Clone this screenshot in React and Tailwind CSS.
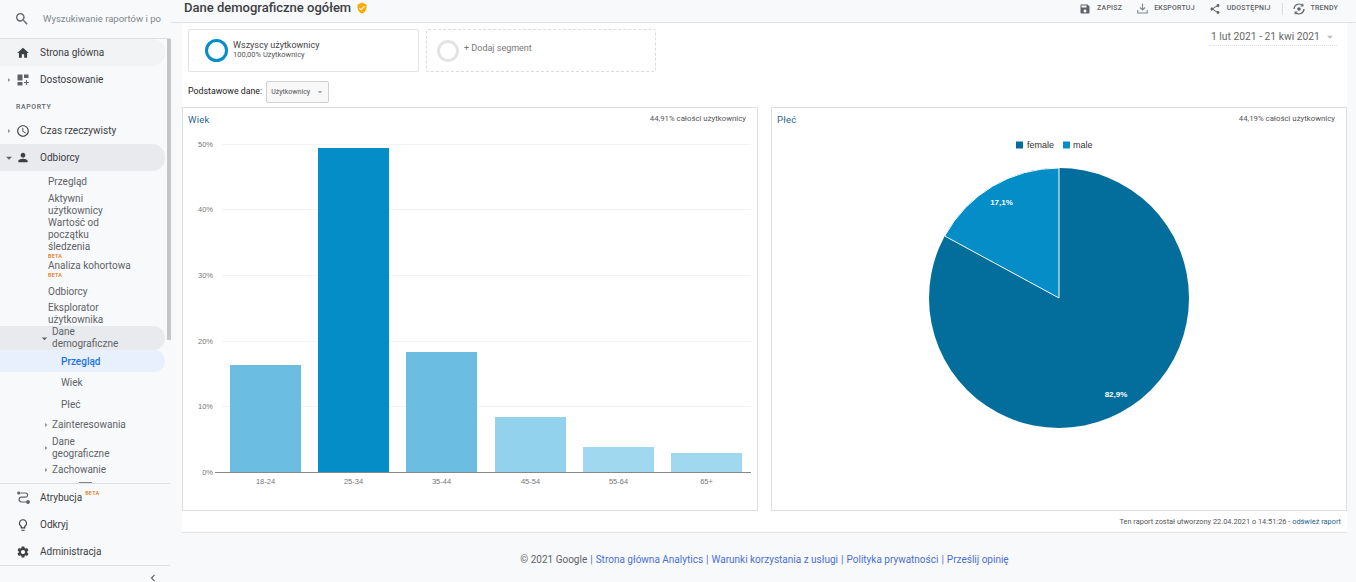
import {
  MdHome,
  MdAccessTime,
  MdPerson,
  MdSearch,
  MdLightbulbOutline,
  MdSettings,
  MdSave,
  MdShare,
  MdVerifiedUser,
  MdChevronLeft,
  MdArrowRight,
  MdArrowDropDown,
} from 'react-icons/md'

const font = { fontFamily: 'Roboto, sans-serif' }

const bars = [
  { label: '18-24', x: 47, top: 365, color: '#6cbde2' },
  { label: '25-34', x: 135, top: 148, color: '#058dc7' },
  { label: '35-44', x: 223, top: 352, color: '#6cbde2' },
  { label: '45-54', x: 312, top: 417, color: '#92d2ec' },
  { label: '55-64', x: 400, top: 447, color: '#a0d8f0' },
  { label: '65+', x: 488, top: 453, color: '#a0d8f0' },
]

const ticks = [
  { label: '50%', y: 144 },
  { label: '40%', y: 209 },
  { label: '30%', y: 275 },
  { label: '20%', y: 341 },
  { label: '10%', y: 406 },
]

function DashIcon() {
  return (
    <svg width="12" height="12" viewBox="0 0 12 12" fill="#5f6368">
      <rect x="0.5" y="0.5" width="5" height="6" />
      <rect x="7" y="0.5" width="4.5" height="3.5" />
      <rect x="0.5" y="8" width="5" height="3.5" />
      <path d="M9 6h1v2h2v1h-2v2H9V9H7V8h2z" />
    </svg>
  )
}

function AttrIcon() {
  return (
    <svg width="13" height="13" viewBox="0 0 13 13" fill="none" stroke="#5f6368" strokeWidth="1.2">
      <circle cx="1.8" cy="2" r="1" fill="#5f6368" />
      <circle cx="11" cy="11" r="1.3" fill="#5f6368" />
      <path d="M3.5 2H8.5A2 2 0 0 1 8.5 6.2H4.5A2.2 2.2 0 0 0 4.5 11H9.5" />
    </svg>
  )
}

function TrendIcon() {
  return (
    <svg width="12" height="12" viewBox="0 0 12 12" fill="none" stroke="#5f6368" strokeWidth="1.2">
      <path d="M1 6a5 5 0 0 1 8.5-3.5M11 6a5 5 0 0 1-8.5 3.5" />
      <path d="M9.8 0.8v2.2H7.6M2.2 11.2V9h2.2" />
      <circle cx="6" cy="6" r="1.8" fill="#5f6368" stroke="none" />
    </svg>
  )
}

function ExportIcon() {
  return (
    <svg width="11" height="11" viewBox="0 0 11 11" fill="none" stroke="#80868b" strokeWidth="1.1">
      <path d="M5.5 0.5v6M3 4.5l2.5 2.5L8 4.5" />
      <path d="M0.8 7v3h9.4V7" />
    </svg>
  )
}

function MainRow({ icon, label, arrow, className = 'h-[27px]', children }) {
  return (
    <div className={`flex w-[165px] shrink-0 items-center rounded-r-[13px] ${className}`}>
      <span className="flex w-[16px] justify-center pl-[2px] text-[#5f6368]">
        {arrow === 'right' && <MdArrowRight size={10} className="text-[#80868b]" />}
        {arrow === 'down' && <MdArrowDropDown size={14} />}
      </span>
      <span className="flex w-[14px] justify-center text-[#3c4043]">{icon}</span>
      <span className="ml-[10px] text-[10px] leading-[12px] text-[#3c4043]">{label}</span>
      {children}
    </div>
  )
}

function Beta() {
  return <div className="text-[5.5px] font-medium leading-[6px] tracking-[0.2px] text-[#e8710a]">BETA</div>
}

function SubRow({ children, className = '' }) {
  return <div className={`pl-[48px] text-[10px] leading-[12px] text-[#5f6368] ${className}`}>{children}</div>
}

function TreeRow({ children, open, className = '' }) {
  return (
    <div className={`flex w-[165px] items-center rounded-r-[13px] ${open ? 'bg-[#e8eaed]' : ''} ${className}`}>
      <span className="flex w-[51px] shrink-0 justify-end text-[#5f6368]">
        {open ? <MdArrowDropDown size={13} /> : <MdArrowRight size={10} className="text-[#80868b]" />}
      </span>
      <span className="ml-[1px] text-[10px] leading-[12px] text-[#5f6368]">{children}</span>
    </div>
  )
}

function Sidebar() {
  return (
    <aside className="relative flex h-[582px] w-[170px] shrink-0 flex-col bg-[#f8f9fa]">
      <div className="flex h-[39px] shrink-0 items-center border-b border-[#e0e0e0] pl-[14px]">
        <MdSearch size={16} className="text-[#5f6368]" />
        <span className="ml-[13px] whitespace-nowrap text-[9.5px] text-[#80868b]">Wyszukiwanie raportów i po</span>
      </div>

      <div className="h-[444px] shrink-0 overflow-hidden">
        <MainRow icon={<MdHome size={14} />} label="Strona główna" className="h-[27px] bg-[#f1f3f4]" />
        <MainRow icon={<DashIcon />} label="Dostosowanie" arrow="right" />
        <div className="flex h-[26px] items-center pl-[16px] pt-[2px] text-[7px] font-medium tracking-[0.6px] text-[#5f6368]">RAPORTY</div>
        <MainRow icon={<MdAccessTime size={14} />} label="Czas rzeczywisty" arrow="right" className="h-[23px]" />
        <MainRow icon={<MdPerson size={15} />} label="Odbiorcy" arrow="down" className="mt-[2px] h-[27px] bg-[#e8eaed]" />

        <SubRow className="pt-[5px]">Przegląd</SubRow>
        <SubRow className="pt-[5px]">Aktywni<br />użytkownicy</SubRow>
        <SubRow>Wartość od<br />początku<br />śledzenia</SubRow>
        <SubRow><Beta /></SubRow>
        <SubRow className="pt-[1px]">Analiza kohortowa</SubRow>
        <SubRow><Beta /></SubRow>
        <SubRow className="pt-[8px]">Odbiorcy</SubRow>
        <SubRow className="pt-[4px]">Eksplorator<br />użytkownika</SubRow>
        <TreeRow open>Dane<br />demograficzne</TreeRow>
        <div className="flex h-[22px] w-[165px] items-center rounded-r-[13px] bg-[#e8f0fe] pl-[61px] text-[10px] font-medium text-[#1a73e8]">Przegląd</div>
        <div className="flex h-[21px] items-center pl-[61px] text-[10px] text-[#5f6368]">Wiek</div>
        <div className="flex h-[22px] items-center pl-[61px] text-[10px] text-[#5f6368]">Płeć</div>
        <TreeRow className="h-[19px]">Zainteresowania</TreeRow>
        <TreeRow className="mt-[2px]">Dane<br />geograficzne</TreeRow>
        <TreeRow className="h-[20px]">Zachowanie</TreeRow>
      </div>

      <div className="flex-1 border-t border-[#e0e0e0]">
        <MainRow icon={<AttrIcon />} label="Atrybucja">
          <span className="-mt-[8px] ml-[3px] text-[5.5px] font-medium tracking-[0.2px] text-[#e8710a]">BETA</span>
        </MainRow>
        <MainRow icon={<MdLightbulbOutline size={14} />} label="Odkryj" />
        <MainRow icon={<MdSettings size={14} />} label="Administracja" />
        <div className="flex h-[17px] justify-end border-t border-[#e0e0e0] pr-[10px] pt-[5px]">
          <MdChevronLeft size={14} className="text-[#5f6368]" />
        </div>
      </div>

      <div className="absolute left-[79px] top-[482px] h-px w-[13px] bg-[#888]" />
      <div className="absolute left-[167px] top-[39px] h-[301px] w-[4px] bg-[#c4c6c8]" />
    </aside>
  )
}

function Action({ icon, label, className = '' }) {
  return (
    <div className={`flex items-center gap-[6px] ${className}`}>
      {icon}
      <span className="text-[7px] font-medium tracking-[0.2px] text-[#5f6368]">{label}</span>
    </div>
  )
}

function Header() {
  return (
    <header className="flex h-[23px] shrink-0 items-center justify-between border-b border-[#e3e3e3] pl-[14px] pr-[18px]">
      <div className="-mt-[7px] flex items-center gap-[5px]">
        <h1 className="whitespace-nowrap text-[13px] font-medium leading-[16px] text-[#3c4043]">Dane demograficzne ogółem</h1>
        <MdVerifiedUser size={12} className="text-[#f9ab00]" />
      </div>
      <div className="-mt-[5px] flex items-center">
        <Action icon={<MdSave size={12} className="text-[#5f6368]" />} label="ZAPISZ" />
        <Action icon={<ExportIcon />} label="EKSPORTUJ" className="ml-[15px]" />
        <Action icon={<MdShare size={12} className="text-[#5f6368]" />} label="UDOSTĘPNIJ" className="ml-[14px]" />
        <div className="ml-[11px] mr-[10px] h-[12px] w-px bg-[#dadce0]" />
        <Action icon={<TrendIcon />} label="TRENDY" />
      </div>
    </header>
  )
}

function Segments() {
  return (
    <div className="flex items-start justify-between">
      <div className="mt-[6px] flex gap-[7px] pl-[6px]">
        <div className="flex h-[43px] w-[231px] items-center rounded-[2px] border border-[#e3e3e3] pl-[16px]">
          <div className="h-[23px] w-[23px] rounded-full border-[3.5px] border-[#058dc7]" />
          <div className="ml-[5px] pb-[3px] text-[#444]">
            <div className="text-[9px] leading-[11px]">Wszyscy użytkownicy</div>
            <div className="text-[7.5px] leading-[8px] text-[#555]">100,00% Użytkownicy</div>
          </div>
        </div>
        <div className="flex h-[43px] w-[230px] items-center rounded-[2px] border border-dashed border-[#dcdcdc] pl-[10px]">
          <div className="h-[22px] w-[22px] rounded-full border-[3px] border-[#e3e3e3]" />
          <div className="ml-[5px] pb-[4px] text-[9px] text-[#777]">+ Dodaj segment</div>
        </div>
      </div>
      <div className="mr-[10px] mt-[6px] flex h-[17px] w-[128px] items-center justify-between border-b border-dotted border-[#dddddd] pl-[2px]">
        <span className="whitespace-nowrap text-[10.3px] text-[#666]">1 lut 2021 - 21 kwi 2021</span>
        <MdArrowDropDown size={14} className="shrink-0 text-[#bbb]" />
      </div>
    </div>
  )
}

function Panel({ title, note, children }) {
  return (
    <section className="h-[404px] w-[576px] border border-[#dfdfdf]">
      <div className="flex h-[24px] items-center justify-between pl-[5px] pr-[11px]">
        <span className="text-[9.5px] tracking-[0.2px] text-[#2a6592]">{title}</span>
        <span className="-mt-[2px] text-[7.8px] text-[#555]">{note}</span>
      </div>
      {children}
    </section>
  )
}

function AgeChart() {
  // y values below are page coordinates, the svg starts at y=132
  return (
    <svg width="574" height="378" viewBox="183 132 574 378" style={{ fontFamily: 'Arial, "Liberation Sans", sans-serif' }}>
      {ticks.map((t) => (
        <g key={t.label}>
          <line x1="222" x2="751" y1={t.y + 0.5} y2={t.y + 0.5} stroke="#f3f3f3" />
          <text x="213" y={t.y + 3} textAnchor="end" fontSize="7.5" fill="#777">{t.label}</text>
        </g>
      ))}
      {bars.map((b) => (
        <g key={b.label}>
          <rect x={b.x + 183} y={b.top} width="71" height={472 - b.top} fill={b.color} />
          <text x={b.x + 218.5} y="484" textAnchor="middle" fontSize="7.5" fill="#777">{b.label}</text>
        </g>
      ))}
      <line x1="215" x2="751" y1="472.5" y2="472.5" stroke="#888" />
      <text x="213" y="475" textAnchor="end" fontSize="7.5" fill="#777">0%</text>
    </svg>
  )
}

function GenderChart() {
  return (
    <svg width="574" height="378" viewBox="772 132 574 378" style={{ fontFamily: 'Arial, "Liberation Sans", sans-serif' }}>
      <rect x="1016" y="141.5" width="7" height="7" fill="#036d9b" />
      <text x="1027" y="148" fontSize="9" fill="#333">female</text>
      <rect x="1063" y="141.5" width="7" height="7" fill="#058dc7" />
      <text x="1073" y="148" fontSize="9" fill="#333">male</text>
      <circle cx="1059" cy="298" r="130" fill="#036d9b" />
      <path d="M1059 298L944.7 236A130 130 0 0 1 1059 168Z" fill="#058dc7" stroke="#ffffff" strokeWidth="1" />
      <text x="1001.5" y="205" textAnchor="middle" fontSize="8" fontWeight="700" fill="#fff">17,1%</text>
      <text x="1116" y="397" textAnchor="middle" fontSize="8" fontWeight="700" fill="#fff">82,9%</text>
    </svg>
  )
}

function Footer() {
  const links = ['Strona główna Analytics', 'Warunki korzystania z usługi', 'Polityka prywatności', 'Prześlij opinię']
  return (
    <footer className="flex flex-1 items-center justify-center pl-[3px] pt-[3px] text-[10px] text-[#5f6368]">
      <span>© 2021 Google</span>
      {links.map((l) => (
        <span key={l}>
          <span className="mx-[3px] text-[#4a6ee0]">|</span>
          <span className="text-[#4a6ee0]">{l}</span>
        </span>
      ))}
    </footer>
  )
}

export default function App() {
  return (
    <div className="flex h-[582px] w-[1356px] overflow-hidden bg-[#f8f9fa]" style={font}>
      <Sidebar />
      <main className="flex min-w-0 flex-1 flex-col">
        <Header />
        <div className="ml-[12px] mr-[9px] h-[510px] shrink-0 border-b border-[#e3e3e3] bg-white">
          <Segments />
          <div className="mt-[9px] flex h-[22px] items-center pl-[6px]">
            <span className="text-[8.8px] text-[#222]">Podstawowe dane:</span>
            <div className="ml-[4px] flex h-[22px] w-[63px] items-center justify-between rounded-[2px] border border-[#d0d0d0] bg-[#f8f8f8] pl-[4px] pr-[3px]">
              <span className="text-[7px] text-[#555]">Użytkownicy</span>
              <MdArrowDropDown size={10} className="text-[#888]" />
            </div>
          </div>
          <div className="mt-[4px] flex gap-[13px]">
            <Panel title="Wiek" note="44,91% całości użytkownicy">
              <AgeChart />
            </Panel>
            <Panel title="Płeć" note="44,19% całości użytkownicy">
              <GenderChart />
            </Panel>
          </div>
          <div className="mt-[5px] pr-[6px] text-right text-[7.4px] text-[#555]">
            Ten raport został utworzony 22.04.2021 o 14:51:26 - <span className="text-[#1c5f8c]">odśwież raport</span>
          </div>
        </div>
        <Footer />
      </main>
    </div>
  )
}
